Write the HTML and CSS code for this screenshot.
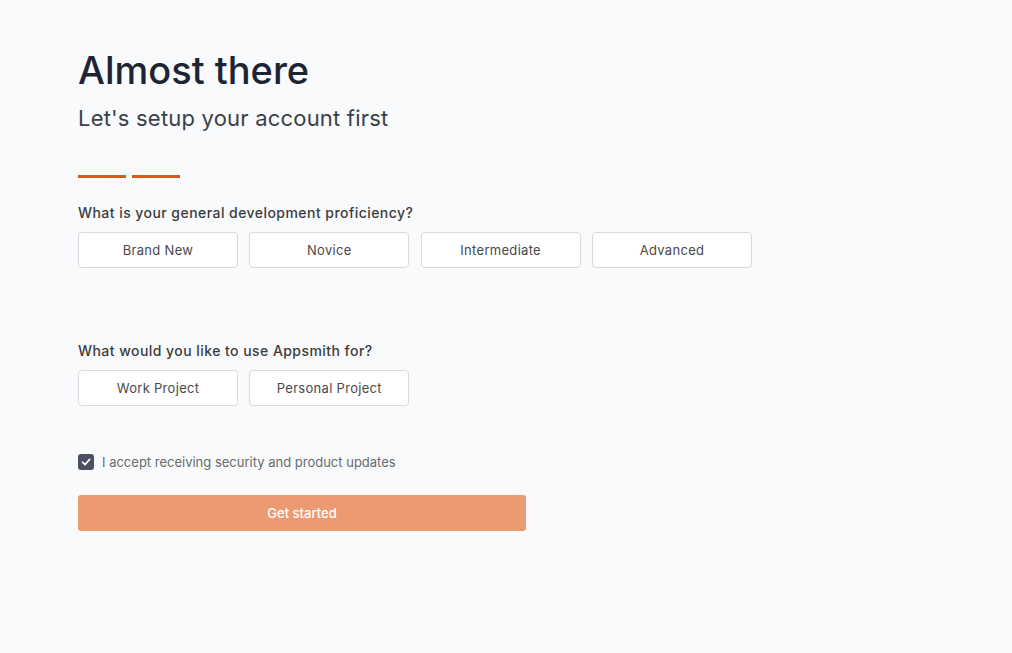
FILE: index.html
```html
<!DOCTYPE html>
<html lang="en">
<head>
    <meta charset="UTF-8">
    <meta name="viewport" content="width=device-width, initial-scale=1.0">
    <title>Welcome</title>
    <link rel="stylesheet" href="styles.css">
</head>
<body>
    <div class="container">
        <h1>Almost there</h1>
        <p class="subtitle">Let's setup your account first</p>

        <div class="steps">
            <span class="step"></span>
            <span class="step"></span>
        </div>

        <form id="setupForm">
            <div class="form-group">
                <label class="question">What is your general development proficiency?</label>
                <div class="options">
                    <button type="button" class="option">Brand New</button>
                    <button type="button" class="option">Novice</button>
                    <button type="button" class="option">Intermediate</button>
                    <button type="button" class="option">Advanced</button>
                </div>
            </div>

            <div class="form-group">
                <label class="question">What would you like to use Appsmith for?</label>
                <div class="options">
                    <button type="button" class="option">Work Project</button>
                    <button type="button" class="option">Personal Project</button>
                </div>
            </div>

            <div class="checkbox-group">
                <span class="checkbox">
                    <svg width="10" height="10" viewBox="0 0 10 10"><path d="M1.5 5.2 L4 7.6 L8.6 2.4" fill="none" stroke="#fff" stroke-width="1.6" stroke-linecap="round" stroke-linejoin="round"/></svg>
                </span>
                <label>I accept receiving security and product updates</label>
            </div>

            <button type="submit" class="submit">Get started</button>
        </form>
    </div>
</body>
</html>
```

FILE: styles.css
```css
body {
    font-family: Inter, "Noto Sans", sans-serif;
    margin: 0;
    background: #f8fafc;
    color: #4b4848;
}
.container {
    padding: 46px 78px;
}
h1 {
    margin: 0;
    font-size: 38px;
    font-weight: 500;
    line-height: 48px;
    color: #1e2433;
}
.subtitle {
    margin: 9px 0 0;
    font-size: 22px;
    line-height: 30px;
    letter-spacing: 0.2px;
    color: #3b3f4a;
}
.steps {
    display: flex;
    gap: 6px;
    margin-top: 42px;
}
.step {
    width: 48px;
    height: 3px;
    background: #e15615;
}
.form-group {
    margin-top: 25px;
}
.form-group + .form-group {
    margin-top: 73px;
}
.question {
    display: block;
    font-size: 14px;
    font-weight: 500;
    line-height: 20px;
    letter-spacing: 0.45px;
    color: #3c3c3c;
    margin-bottom: 9px;
}
.options {
    display: flex;
    gap: 11.33px;
}
.option {
    width: 160px;
    height: 36px;
    background: #fff;
    border: 1px solid #d7d9dd;
    border-radius: 4px;
    font-family: inherit;
    font-size: 13px;
    letter-spacing: 0.3px;
    color: #4b4848;
    cursor: pointer;
}
.checkbox-group {
    display: flex;
    align-items: center;
    gap: 8px;
    margin-top: 48px;
}
.checkbox {
    width: 16px;
    height: 16px;
    border-radius: 3px;
    background: #4b5162;
    display: flex;
    align-items: center;
    justify-content: center;
}
.checkbox-group label {
    font-size: 13px;
    color: #6a6a6a;
}
.submit {
    display: block;
    width: 448px;
    height: 36px;
    margin-top: 25px;
    background: #eb9a72;
    color: #fff;
    border: none;
    border-radius: 3px;
    font-family: inherit;
    font-size: 13px;
    font-weight: 500;
    cursor: pointer;
}
```
